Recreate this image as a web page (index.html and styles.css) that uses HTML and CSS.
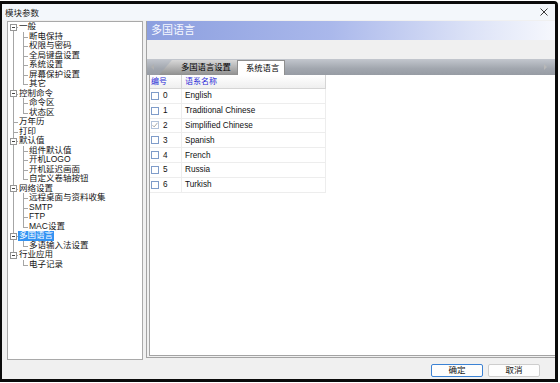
FILE: index.html
```html
<!DOCTYPE html>
<html lang="zh-CN">
<head>
  <meta charset="UTF-8" />
  <meta name="viewport" content="width=device-width, initial-scale=1.0"/>
  <title>模块参数</title>
  <link rel="stylesheet" href="styles.css">
</head>
<body>
  <div class="window">
    <!-- Barra de título -->
    <div class="titlebar">
      <span class="title">模块参数</span>
      <svg class="close" width="8" height="8" viewBox="0 0 8 8"><path d="M0.5 0.5L7.5 7.5M7.5 0.5L0.5 7.5" stroke="#3a3a3a" stroke-width="1" fill="none"/></svg>
    </div>

    <div class="main">
      <!-- Árbol de módulos -->
      <div class="tree-box">
        <ul class="tree">
          <li class="root"><span class="box"></span><span class="label">一般</span>
            <ul class="kids">
              <li><span class="label">断电保持</span></li>
              <li><span class="label">权限与密码</span></li>
              <li><span class="label">全局键盘设置</span></li>
              <li><span class="label">系统设置</span></li>
              <li><span class="label">屏幕保护设置</span></li>
              <li><span class="label">其它</span></li>
            </ul>
          </li>
          <li class="root"><span class="box"></span><span class="label">控制命令</span>
            <ul class="kids">
              <li><span class="label">命令区</span></li>
              <li><span class="label">状态区</span></li>
            </ul>
          </li>
          <li class="root"><span class="label">万年历</span></li>
          <li class="root"><span class="label">打印</span></li>
          <li class="root"><span class="box"></span><span class="label">默认值</span>
            <ul class="kids">
              <li><span class="label">组件默认值</span></li>
              <li><span class="label">开机LOGO</span></li>
              <li><span class="label">开机延迟画面</span></li>
              <li><span class="label">自定义卷轴按钮</span></li>
            </ul>
          </li>
          <li class="root"><span class="box"></span><span class="label">网络设置</span>
            <ul class="kids">
              <li><span class="label">远程桌面与资料收集</span></li>
              <li><span class="label">SMTP</span></li>
              <li><span class="label">FTP</span></li>
              <li><span class="label">MAC设置</span></li>
            </ul>
          </li>
          <li class="root"><span class="box"></span><span class="label selected">多国语言</span>
            <ul class="kids">
              <li><span class="label">多语输入法设置</span></li>
            </ul>
          </li>
          <li class="root"><span class="box"></span><span class="label">行业应用</span>
            <ul class="kids">
              <li><span class="label">电子记录</span></li>
            </ul>
          </li>
        </ul>
      </div>

      <!-- Panel derecho -->
      <div class="panel">
        <div class="panel-head">多国语言</div>
        <div class="panel-gap"></div>
        <div class="tabs">
          <span class="arrow arrow-left"></span>
          <span class="tab tab-off">多国语言设置</span>
          <span class="tab tab-on">系统语言</span>
          <span class="arrow arrow-right"></span>
        </div>
        <div class="list">
          <div class="list-head">
            <div class="hcell col-num">编号</div>
            <div class="hcell col-name">语系名称</div>
          </div>
          <div class="row"><div class="cell col-num"><span class="check"></span>0</div><div class="cell col-name">English</div></div>
          <div class="row"><div class="cell col-num"><span class="check"></span>1</div><div class="cell col-name">Traditional Chinese</div></div>
          <div class="row"><div class="cell col-num"><span class="check on"><svg width="6" height="6" viewBox="0 0 6 6"><path d="M0.5 3.2L2.2 4.9L5.5 0.8" fill="none" stroke="#a9a9a9" stroke-width="1"/></svg></span>2</div><div class="cell col-name">Simplified Chinese</div></div>
          <div class="row"><div class="cell col-num"><span class="check"></span>3</div><div class="cell col-name">Spanish</div></div>
          <div class="row"><div class="cell col-num"><span class="check"></span>4</div><div class="cell col-name">French</div></div>
          <div class="row"><div class="cell col-num"><span class="check"></span>5</div><div class="cell col-name">Russia</div></div>
          <div class="row"><div class="cell col-num"><span class="check"></span>6</div><div class="cell col-name">Turkish</div></div>
        </div>
      </div>
    </div>

    <!-- Botones -->
    <div class="footer">
      <button class="btn btn-default">确定</button>
      <button class="btn">取消</button>
    </div>
  </div>
</body>
</html>
```

FILE: styles.css
```css
/* Reset básico */
* {
  margin: 0;
  padding: 0;
  box-sizing: border-box;
}
body {
  background: #fff;
  font-family: "Liberation Sans", "Noto Sans CJK SC", sans-serif;
  color: #000;
}
/* Ventana */
.window {
  width: 558px;
  height: 381px;
  margin-top: 1px;
  border: 3px solid #0b0b0b;
  border-left-width: 2px;
  border-top-right-radius: 4px;
  background: #f0f0f0;
  overflow: hidden;
  display: flex;
  flex-direction: column;
}
.titlebar {
  height: 16px;
  flex: none;
  background: #f3f7fb;
  display: flex;
  align-items: center;
  justify-content: space-between;
  padding: 0 7px 0 3px;
  font-size: 8.5px;
  color: #1a1a1a;
}
.main {
  display: flex;
  align-items: flex-start;
  padding: 1px 0 0 5px;
  gap: 3px;
}
/* Árbol */
.tree-box {
  width: 136px;
  height: 339px;
  flex: none;
  background: #fff;
  border: 1px solid #a9a9a9;
}
.tree,
.kids {
  list-style: none;
}
.tree li {
  position: relative;
  line-height: 9.5px;
  font-size: 8.5px;
  color: #141414;
  white-space: nowrap;
}
.label {
  display: inline-block;
  height: 9.5px;
  padding: 0 1px;
  margin-left: -1px;
}
.label.selected {
  background: #3393f3;
  color: #fff;
}
.root {
  padding-left: 11px;
}
.root::before {
  content: "";
  position: absolute;
  left: 5px;
  top: 0;
  height: 100%;
  border-left: 1px solid #a6a6a6;
}
.root:first-child::before {
  top: 5px;
  height: calc(100% - 5px);
}
.root:last-child::before {
  height: 5px;
}
.root::after,
.kids li::after {
  content: "";
  position: absolute;
  top: 5px;
  width: 5px;
  border-top: 1px solid #a6a6a6;
}
.root::after {
  left: 5px;
}
.kids li {
  padding-left: 10px;
}
.kids li::before {
  content: "";
  position: absolute;
  left: 4px;
  top: 0;
  height: 100%;
  border-left: 1px solid #a6a6a6;
}
.kids li:last-child::before {
  height: 5px;
}
.kids li::after {
  left: 4px;
}
.box {
  position: absolute;
  z-index: 1;
  left: 2px;
  top: 1.5px;
  width: 7px;
  height: 7px;
  border: 1px solid #959595;
  background: #fff;
}
.box::after {
  content: "";
  position: absolute;
  left: 1px;
  top: 2px;
  width: 3px;
  height: 1px;
  background: #444;
}
/* Panel derecho */
.panel {
  flex: 1;
  height: 337px;
  display: flex;
  flex-direction: column;
  border-left: 1px solid #a3a3a3;
  border-bottom: 1px solid #a3a3a3;
}
.panel-head {
  height: 19px;
  flex: none;
  padding-left: 4px;
  line-height: 19px;
  font-size: 11px;
  color: #f6f8ff;
  background: linear-gradient(to right, #8c9fdf, #aab8eb 45%, #dde3f7 80%, #f6f8fd);
}
.panel-gap {
  height: 19px;
  flex: none;
}
.tabs {
  height: 16px;
  flex: none;
  display: flex;
  align-items: flex-end;
  background: linear-gradient(#c3c7ce, #a1a6ae 60%, #979ca4);
}
.arrow {
  align-self: center;
  width: 0;
  height: 0;
  border-top: 3px solid transparent;
  border-bottom: 3px solid transparent;
}
.arrow-left {
  margin: 0 5px 0 4px;
  border-right: 3px solid #b0b0b0;
}
.arrow-right {
  margin: 0 8px 0 auto;
  border-left: 3px solid #b8b8b8;
}
.tab {
  height: 15px;
  line-height: 15px;
  font-size: 8.3px;
  white-space: nowrap;
}
.tab-off {
  width: 78px;
  padding-left: 22px;
  background: linear-gradient(#d8d8d8, #8f8f8f);
  clip-path: polygon(0 100%, 13px 0, 100% 0, 100% 100%);
}
.tab-on {
  width: 48px;
  padding-left: 8px;
  background: #fff;
  border: 1px solid #8f8f8f;
  border-bottom: none;
}
/* Lista de idiomas */
.list {
  flex: 1;
  margin: 0 0 1px 2px;
  background: #fff;
  border-left: 1px solid #a3a3a3;
  border-bottom: 1px solid #a3a3a3;
}
.list-head {
  display: flex;
  height: 14px;
}
.hcell {
  height: 14px;
  line-height: 13px;
  font-size: 8px;
  color: #2a2ad6;
  background: linear-gradient(#ffffff, #efefef);
  border-right: 1px solid #d5d5d5;
  border-bottom: 1px solid #d5d5d5;
}
.col-num {
  width: 32px;
  padding-left: 1px;
}
.col-name {
  width: 144px;
  padding-left: 3px;
}
.row {
  display: flex;
  height: 14.8px;
}
.cell {
  display: flex;
  align-items: center;
  font-size: 8.2px;
  color: #111;
  border-right: 1px solid #ededed;
  border-bottom: 1px solid #ededed;
}
.cell.col-num {
  padding-left: 1px;
}
.check {
  width: 8px;
  height: 8px;
  margin-right: 4px;
  border: 1px solid #7f9cc9;
  background: #fff;
  display: flex;
  align-items: center;
  justify-content: center;
}
.check.on {
  border-color: #b3c2da;
}
/* Botones inferiores */
.footer {
  flex: 1;
  display: flex;
  justify-content: flex-end;
  align-items: flex-start;
  gap: 5px;
  padding: 4px 15px 0 0;
}
.btn {
  width: 52px;
  height: 13px;
  font-family: "Liberation Sans", "Noto Sans CJK SC", sans-serif;
  font-size: 8.5px;
  line-height: 11px;
  color: #111;
  background: #fdfdfd;
  border: 1px solid #cdcdcd;
  border-radius: 2px;
}
.btn-default {
  border-color: #3b82d4;
}
```
